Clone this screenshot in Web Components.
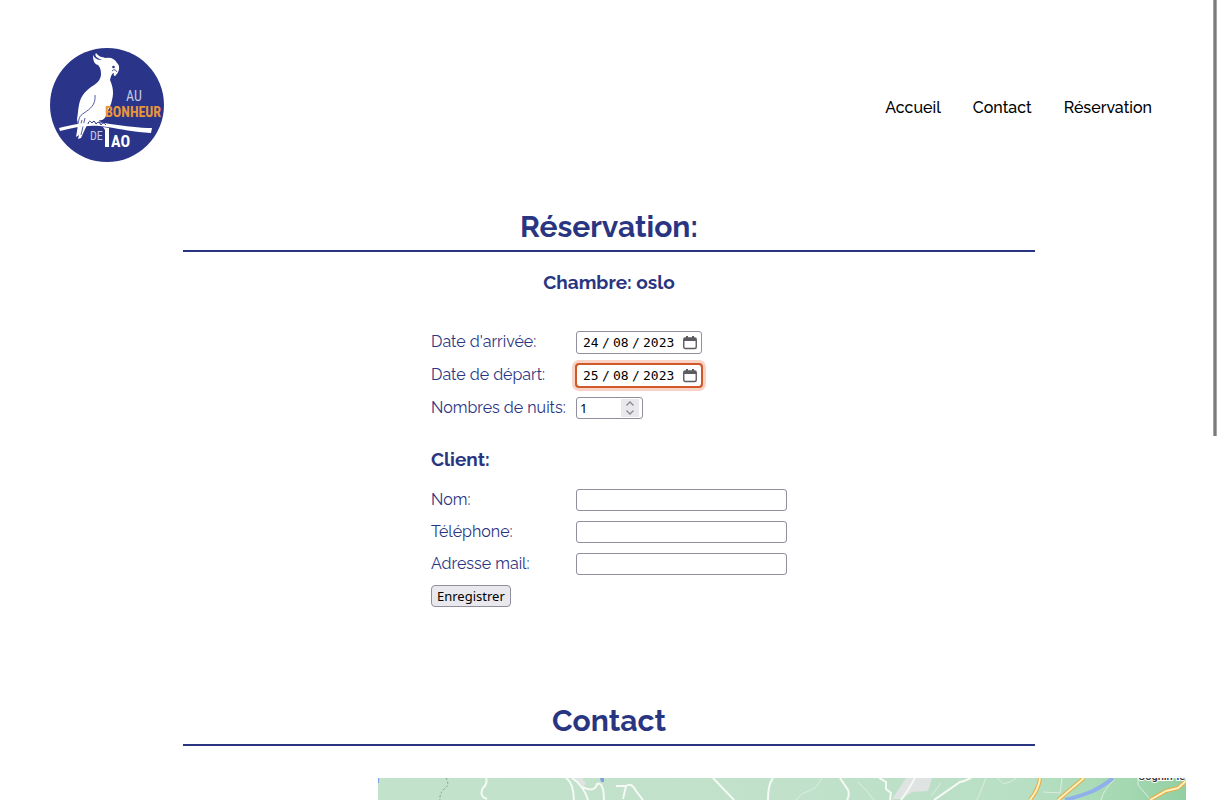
<!DOCTYPE html>
<html lang="fr">
<head>
<meta charset="utf-8">
<title>Au Bonheur de Tao</title>
<style>
  body { margin: 0; background: #fff; }
</style>
</head>
<body>
<tao-page>
  <tao-header slot="header"></tao-header>
  <tao-section heading="Réservation:">
    <tao-booking room="oslo"></tao-booking>
  </tao-section>
  <tao-section heading="Contact"></tao-section>
  <tao-map></tao-map>
</tao-page>
<script>
const define = (name, html, setup) => customElements.define(name, class extends HTMLElement {
  constructor() {
    super();
    this.attachShadow({ mode: 'open' }).innerHTML = html;
  }
  connectedCallback() { if (setup) setup(this, this.shadowRoot); }
});

define('tao-page', `
<style>
  :host { display: block; position: relative; height: 100vh; overflow: hidden; color: #2a3582;
    font-family: Raleway, Lato, sans-serif; font-size: 16px; line-height: 20px; }
  .scroll { height: 100%; overflow-y: auto; scrollbar-width: none; }
  .thumb { position: absolute; top: 0; right: 1px; width: 4px; height: 436px; box-sizing: border-box;
    border: 1px solid #a6a6a6; border-width: 0 1px; background: #7b7b7b; }
</style>
<div class="scroll"><slot name="header"></slot><main><slot></slot></main></div>
<div class="thumb"></div>`);

define('tao-logo', `
<style>
  :host { display: block; width: 114px; height: 114px; }
  svg { display: block; width: 100%; height: 100%; }
  text { font-family: "Liberation Sans Narrow", "Roboto Condensed", Roboto, sans-serif; }
</style>
<svg viewBox="0 0 114 114" role="img" aria-label="Au Bonheur de Tao">
  <circle cx="57" cy="57" r="57" fill="#2a3488"/>
  <path fill="#fff" d="M48 17C44 16 43 12 43 7C45 11 48 12 52 12C47 10 44 8 46 5C49 9 52 9 56 10C61 9 65 11 67 15C70 17 70 23 66 27C65 29 63 28 64 25C62 25 61 28 60 32C63 39 64 45 62 52C61 58 58 61 57 66C55 71 51 74 46 75L38 76C36 78 34 84 31 90L28 91L29 87L26 89L28 77L27 71C28 66 28 61 29 57C30 50 34 44 41 39C48 35 51 31 51 26C51 22 50 19 48 17Z"/>
  <circle cx="63.5" cy="19" r="1.3" fill="#2a3488"/>
  <path d="M62 23Q65 20 67 24" fill="none" stroke="#2a3488" stroke-width=".8"/>
  <path d="M45 47C46 57 40 61 34 65C29 68 29 71 28 76M35 70L31 87M32 72L30 79" fill="none" stroke="#2a3488" stroke-width=".8"/>
  <path d="M9 80C29 75 43 73 60 76C76 78 89 80 102 80L101 85C84 84 71 81 57 79C40 76 26 79 10 83Z" fill="#fff"/>
  <path d="M38 76Q39 71 42 75Q44 71 46 76Q49 72 51 77Q53 73 56 77M49 73L55 72" fill="none" stroke="#2a3488" stroke-width="1"/>
  <text x="76" y="53" font-size="14" fill="#c3c8e4">AU</text>
  <text x="55" y="69" font-size="14" font-weight="700" fill="#e9963a">BONHEUR</text>
  <text x="40" y="92" font-size="12" fill="#c3c8e4">DE</text>
  <path d="M53 79L59 80V99H55V82Z" fill="#fff"/>
  <text x="61" y="99" font-size="16" font-weight="700" fill="#fff">AO</text>
</svg>`);

define('tao-header', `
<style>
  :host { display: block; }
  header { display: flex; align-items: center; justify-content: space-between; padding: 48px 66px 32px 50px; }
  nav { display: flex; gap: 32px; padding-top: 6px; font-weight: 500; }
  a { color: #000; text-decoration: none; }
</style>
<header>
  <tao-logo></tao-logo>
  <nav><a href="#accueil">Accueil</a><a href="#contact">Contact</a><a href="#reservation">Réservation</a></nav>
</header>`);

define('tao-section', `
<style>
  :host { display: block; width: 70%; margin: 0 auto; padding: 15px 0 32px; }
  h2 { margin: 0; padding-bottom: 5px; border-bottom: 2px solid #2a3582; font-size: 30px; line-height: 36px; text-align: center; }
</style>
<h2></h2><slot></slot>`, (el, root) => { root.querySelector('h2').textContent = el.getAttribute('heading'); });

const CALENDAR = `url("data:image/svg+xml,%3Csvg xmlns='http://www.w3.org/2000/svg' width='14' height='14' viewBox='0 0 14 14'%3E%3Crect x='.75' y='2' width='12.5' height='10.5' rx='1.500' fill='none' stroke='%235b5b60' stroke-width='1.400'/%3E%3Cpath d='M1 2h12v3H1zM3 0h2v2H3zM9 0h2v2H9z' fill='%235b5b60'/%3E%3C/svg%3E")`;
const SPIN = `url("data:image/svg+xml,%3Csvg xmlns='http://www.w3.org/2000/svg' viewBox='0 0 18 18'%3E%3Cpath d='M5.500 6.500L9 3l3.500 3.500M5.500 11.500L9 15l3.500-3.500' fill='none' stroke='%238a8a90' stroke-width='1.300'/%3E%3C/svg%3E")`;

define('tao-booking', `
<style>
  :host { display: block; padding-bottom: 49px; }
  h3 { margin: 0; font-size: 19px; line-height: 24px; }
  .room { margin: 18px 0 37px; text-align: center; }
  form { display: grid; grid-template-columns: 135px 211px; gap: 10px; width: max-content; margin: 0 auto; align-items: center; }
  label { white-space: nowrap; line-height: 20px; padding-bottom: 1px; }
  .client { grid-column: 1 / -1; padding: 18px 0 8px; }
  input { box-sizing: border-box; height: 22px; margin: 0; padding: 1px 4px; border: 1px solid #8f8f9d; border-radius: 3px;
    background: #fff; color: #000; font: 13px/18px "Noto Sans", sans-serif; justify-self: start; outline: none; }
  input:not([type=date]):not([type=number]) { width: 100%; }
  input[type=date] { width: 126px; height: 23px; padding: 0 7px 0 6px; font: 13px/20px "DejaVu Sans Mono", monospace; }
  input.active { outline: 2px solid #d0592c; outline-offset: -1px; box-shadow: 0 0 0 4px #f9d3c5; }
  ::-webkit-datetime-edit { padding: 0; flex: none; width: 98px; }
  /* day / month / year order, whatever the browser's locale */
  ::-webkit-datetime-edit-fields-wrapper { display: grid; grid-template-columns: 16px 14px 16px 14px 32px; padding: 0; }
  ::-webkit-datetime-edit-day-field { grid-area: 1 / 1; padding: 0; }
  ::-webkit-datetime-edit-month-field { grid-area: 1 / 3; padding: 0; }
  ::-webkit-datetime-edit-year-field { grid-area: 1 / 5; padding: 0; }
  ::-webkit-datetime-edit-text { grid-row: 1; padding: 0; text-align: center; }
  ::-webkit-calendar-picker-indicator { box-sizing: border-box; flex: none; width: 14px; height: 14px; padding: 0; margin: 0; background: ${CALENDAR} center / 14px 14px no-repeat; }
  input[type=number] { width: 67px; padding: 0 3px; }
  ::-webkit-inner-spin-button { appearance: none; opacity: 1; width: 18px; height: 18px; background: #e9e9ed ${SPIN} center / 18px no-repeat; }
  button { justify-self: start; box-sizing: border-box; height: 22px; padding: 0 5px; border: 1px solid #8f8f9d; border-radius: 4px;
    background: #e9e9ed; color: #000; font: 13px/18px "Noto Sans", sans-serif; white-space: nowrap; }
</style>
<h3 class="room"></h3>
<form>
  <label for="from">Date d'arrivée:</label><input id="from" type="date" value="2023-08-24">
  <label for="to">Date de départ:</label><input id="to" class="active" type="date" value="2023-08-25">
  <label for="nights">Nombres de nuits:</label><input id="nights" type="number" value="1">
  <h3 class="client">Client:</h3>
  <label for="name">Nom:</label><input id="name" type="text">
  <label for="phone">Téléphone:</label><input id="phone" type="tel">
  <label for="mail">Adresse mail:</label><input id="mail" type="email">
  <button type="button">Enregistrer</button>
</form>`, (el, root) => { root.querySelector('.room').textContent = 'Chambre: ' + el.getAttribute('room'); });

define('tao-map', `
<style>
  :host { display: block; padding: 0 32px; }
  .map { width: 70%; height: 400px; margin-left: auto; overflow: hidden; background: #c2e2cb; }
  svg { display: block; width: 100%; height: 100%; }
  text { font: 500 11px Roboto, sans-serif; }
</style>
<div class="map">
<svg viewBox="0 0 808 400" preserveAspectRatio="xMinYMin slice" role="img" aria-label="Carte">
  <defs><linearGradient id="g"><stop offset="0" stop-color="#c2e2cb"/><stop offset=".5" stop-color="#c1e1cb"/><stop offset=".8" stop-color="#b8dfc4"/><stop offset=".93" stop-color="#a3d8b0"/><stop offset="1" stop-color="#93cfa3"/></linearGradient></defs>
  <rect width="808" height="400" fill="url(#g)"/>
  <path d="M528 0H554L550 13L534 14L524 21H514L520 12Z" fill="#dfe3e1"/>
  <path d="M196 0H204L208 6L204 9Z" fill="#dfe3e1"/>
  <path d="M222 0h4v4h-3zM0 0h1v5h-1z" fill="#7f9fe0"/>
  <path d="M68 0Q72 7 67 10Q61 16 62 22" fill="none" stroke="#7c9b86" stroke-dasharray="2 2"/>
  <g fill="none" stroke="#f5faf4" stroke-width="2">
    <path d="M108 0Q110 5 105 10Q102 15 105 19L109 21"/>
    <path d="M188 0Q196 5 196 24M194 0Q206 8 210 22M204 9Q217 15 219 6Q226 3 226 24"/>
    <path d="M335 0L356 22M395 0Q390 6 390 22"/>
    <path d="M238 8H248L245 21M247 9Q253 3 258 13L265 22"/>
    <path d="M462 0L470 12Q472 17 469 22M501 0L508 4V11L513 15L512 22M537 0L530 12L523 22M556 22L582 4L586 3L593 0"/>
  </g>
  <g fill="none" stroke="#dceddf" stroke-width="1">
    <path d="M418 22L424 16L437 10L444 0M480 4L488 12L496 22M553 18L563 5M599 22L608 0M619 0L626 6L634 3L638 0M665 14L682 15L684 0M723 22Q725 12 737 1M760 0V7L772 21"/>
  </g>
  <path d="M687 22Q703 18 715 13Q727 7 735 0" fill="none" stroke="#8fb0eb" stroke-width="4"/>
  <g fill="none" stroke="#e3ac4c" stroke-width="4"><path d="M662 0Q661 11 652 22M706 0L680 22M808 3L800 10L788 13L772 22"/></g>
  <g fill="none" stroke="#fdf0b8" stroke-width="2"><path d="M662 0Q661 11 652 22M706 0L680 22M808 3L800 10L788 13L772 22"/></g>
  <text x="760" y="2" fill="#333" stroke="#fff" stroke-width="2" paint-order="stroke">Cognin-le</text>
</svg></div>`);
</script>
</body>
</html>
